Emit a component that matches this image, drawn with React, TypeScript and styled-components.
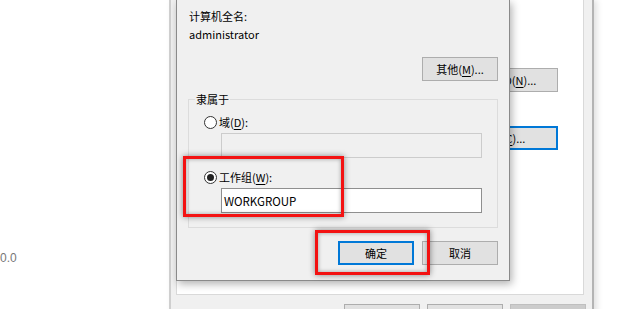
import React from "react";
import styled, { createGlobalStyle } from "styled-components";

const GlobalStyle = createGlobalStyle`
  html, body { margin: 0; padding: 0; background: #fff; }
  body {
    font-family: "Noto Sans CJK SC", "Noto Sans", sans-serif;
    font-size: 11px;
    color: #000;
  }
  #root { width: 620px; height: 309px; }
`;

const Desktop = styled.div`
  position: relative;
  width: 620px;
  height: 309px;
  overflow: hidden;
  background: #fff;
`;

const BgPage = styled.div`
  display: flex;
  flex-direction: column;
  padding-top: 249px;
`;

const BgText = styled.span`
  font-family: "Liberation Sans", Arial, sans-serif;
  font-size: 12px;
  line-height: 18px;
  color: #777;
`;

/* ---------- window behind ---------- */
const BackWindow = styled.div`
  position: absolute;
  left: 169px;
  top: 0;
  width: 425px;
  height: 330px;
  box-sizing: border-box;
  background: #f0f0f0;
  border-left: 2px solid #cfcfcf;
  border-right: 2px solid #b4b4b4;
  box-shadow: 3px 0 6px rgba(0, 0, 0, 0.12);
  display: flex;
  flex-direction: column;
`;

const TabPanel = styled.div`
  height: 295px;
  box-sizing: border-box;
  margin: 0 8px 0 5px;
  background: #fff;
  border: 1px solid #d9d9d9;
  border-top: none;
  display: flex;
  flex-direction: column;
  align-items: flex-end;
  padding: 68px 25px 0 0;
  gap: 34px;
`;

const WinButton = styled.div<{ $focus?: boolean; $disabled?: boolean; $w?: number }>`
  width: ${(p) => p.$w ?? 76}px;
  height: 24px;
  box-sizing: border-box;
  display: flex;
  align-items: center;
  justify-content: center;
  white-space: nowrap;
  font-size: 11px;
  line-height: 1;
  color: #000;
  background: ${(p) => (p.$disabled ? "#cccccc" : "#e1e1e1")};
  border: 1px solid ${(p) => (p.$focus ? "#0078d7" : p.$disabled ? "#bfbfbf" : "#adadad")};
  box-shadow: ${(p) => (p.$focus ? "inset 0 0 0 1px #0078d7" : "none")};
  flex-shrink: 0;

  u { text-decoration: underline; text-underline-offset: 2px; }
`;

const BottomRow = styled.div`
  display: flex;
  justify-content: flex-end;
  gap: 7px;
  padding: 9px 6px 0 0;
`;

/* ---------- dialog ---------- */
const Dialog = styled.div`
  position: absolute;
  left: 176px;
  top: 0;
  width: 334px;
  height: 281px;
  box-sizing: border-box;
  background: #f0f0f0;
  border: 1px solid #8a8a8a;
  border-top: none;
  box-shadow: 2px 3px 8px rgba(0, 0, 0, 0.3);
  padding: 7px 11px 0 12px;
  display: flex;
  flex-direction: column;
`;

const Line = styled.div`
  line-height: 18px;
  height: 18px;
  white-space: nowrap;
`;

const RightRow = styled.div<{ $top: number }>`
  display: flex;
  justify-content: flex-end;
  gap: 8px;
  margin-top: ${(p) => p.$top}px;
`;

const GroupBox = styled.div`
  position: relative;
  margin: 18px 0 0 -1px;
  border: 1px solid #dcdcdc;
  padding: 13px 15px 14px 15px;
  display: flex;
  flex-direction: column;
`;

const Legend = styled.span`
  position: absolute;
  top: -10px;
  left: 6px;
  padding: 0 1px;
  line-height: 18px;
  background: #f0f0f0;
`;

const RadioRow = styled.label<{ $top: number }>`
  display: flex;
  align-items: center;
  gap: 2px;
  height: 18px;
  line-height: 18px;
  margin-top: ${(p) => p.$top}px;

  u { text-decoration: underline; text-underline-offset: 2px; }
`;

const RadioDot = styled.span<{ $checked?: boolean }>`
  width: 13px;
  height: 13px;
  box-sizing: border-box;
  border-radius: 50%;
  border: 1px solid #333;
  background: #fff;
  display: flex;
  align-items: center;
  justify-content: center;

  &::after {
    content: "";
    width: 7px;
    height: 7px;
    border-radius: 50%;
    background: ${(p) => (p.$checked ? "#222" : "transparent")};
  }
`;

const TextBox = styled.div<{ $disabled?: boolean }>`
  margin: 2px 0 0 17px;
  height: 25px;
  box-sizing: border-box;
  background: ${(p) => (p.$disabled ? "#f0f0f0" : "#fff")};
  border: 1px solid ${(p) => (p.$disabled ? "#cccccc" : "#8f8f8f")};
  display: flex;
  align-items: center;
  padding-left: 2px;
  font-size: 11.5px;
`;

/* ---------- annotations ---------- */
const Marker = styled.div<{ $x: number; $y: number; $w: number; $h: number }>`
  position: absolute;
  left: ${(p) => p.$x}px;
  top: ${(p) => p.$y}px;
  width: ${(p) => p.$w}px;
  height: ${(p) => p.$h}px;
  box-sizing: border-box;
  border: 3px solid #f31212;
  box-shadow: 0 0 6px rgba(0, 0, 0, 0.45), inset 0 0 4px rgba(0, 0, 0, 0.35);
`;

export default function App() {
  return (
    <>
      <GlobalStyle />
      <Desktop>
        <BgPage>
          <BgText>0.0</BgText>
        </BgPage>

        <BackWindow>
          <TabPanel>
            <WinButton $w={103}>网络 ID(<u>N</u>)...</WinButton>
            <WinButton $w={111} $focus>更改(<u>C</u>)...</WinButton>
          </TabPanel>
          <BottomRow>
            <WinButton aria-label="确定" />
            <WinButton aria-label="取消" />
            <WinButton aria-label="应用" $disabled />
          </BottomRow>
        </BackWindow>

        <Dialog>
          <Line>计算机全名:</Line>
          <Line>administrator</Line>
          <RightRow $top={14}>
            <WinButton>其他(<u>M</u>)...</WinButton>
          </RightRow>
          <GroupBox>
            <Legend>隶属于</Legend>
            <RadioRow $top={0}>
              <RadioDot />
              <span>域(<u>D</u>):</span>
            </RadioRow>
            <TextBox $disabled />
            <RadioRow $top={10}>
              <RadioDot $checked />
              <span>工作组(<u>W</u>):</span>
            </RadioRow>
            <TextBox>WORKGROUP</TextBox>
          </GroupBox>
          <RightRow $top={13}>
            <WinButton $focus>确定</WinButton>
            <WinButton>取消</WinButton>
          </RightRow>
        </Dialog>

        <Marker $x={183} $y={156} $w={161} $h={61} />
        <Marker $x={315} $y={230} $w={115} $h={45} />
      </Desktop>
    </>
  );
}
